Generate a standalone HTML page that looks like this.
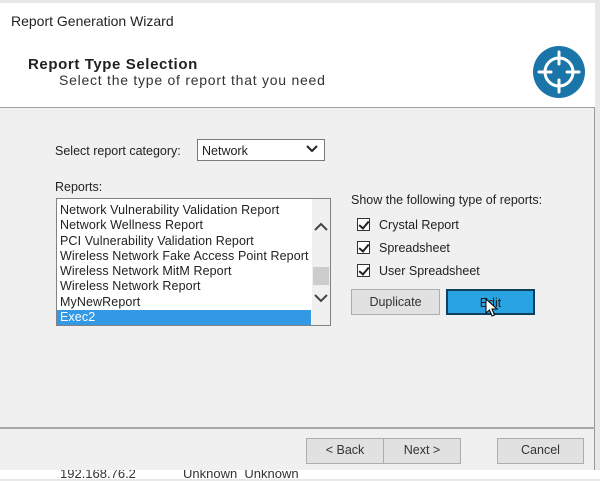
<!DOCTYPE html>
<html><head><style>
*{margin:0;padding:0;box-sizing:border-box}
body{width:600px;height:479px;overflow:hidden;background:#e8e8e8;font-family:"Liberation Sans",sans-serif;font-size:12.5px;color:#222;position:relative}
.a{position:absolute}
.win{left:0;top:3px;width:595px;height:467px;background:#f0f0f0;border-right:1px solid #999}
.btn{position:absolute;background:#e1e1e1;border:1px solid #adadad;text-align:center;line-height:23px;color:#333}
.cb{position:absolute;width:13px;height:13px;border:1px solid #333;background:#fff}
.cb:after{content:"";position:absolute;left:3px;top:0px;width:4px;height:8px;border:solid #222;border-width:0 2px 2px 0;transform:rotate(40deg)}
</style></head><body>
<div class="a" style="left:0;top:470px;width:600px;height:9px;background:#fff"></div>
<div class="a" style="left:60px;top:466px;font-size:13px;color:#333">192.168.76.2</div>
<div class="a" style="left:183px;top:466px;font-size:13px;color:#333">Unknown&nbsp;&nbsp;Unknown</div>
<div class="a win"></div>
<div class="a" style="left:0;top:3px;width:595px;height:104px;background:#fff"></div>
<div class="a" style="left:0;top:107px;width:595px;height:1px;background:#a0a0a0"></div>
<div class="a" style="left:11px;top:13px;font-size:14px;color:#222">Report Generation Wizard</div>
<div class="a" style="left:28px;top:56px;font-size:15px;letter-spacing:0.6px;font-weight:bold;color:#222">Report Type Selection</div>
<div class="a" style="left:59px;top:72px;font-size:14px;letter-spacing:0.75px;color:#333">Select the type of report that you need</div>
<svg class="a" style="left:533px;top:46px" width="52" height="52" viewBox="0 0 52 52">
<circle cx="26" cy="26" r="26" fill="#1a75a8"/>
<circle cx="26" cy="26" r="14" fill="none" stroke="#fff" stroke-width="3"/>
<path d="M26 6V18M26 34V46M6 26H18M34 26H46" stroke="#fff" stroke-width="3" stroke-linecap="round"/>
</svg>
<div class="a" style="left:55px;top:144px">Select report category:</div>
<div class="a" style="left:197px;top:139px;width:128px;height:22px;background:#fff;border:1px solid #7a7a7a;padding:4px 4px">Network</div>
<svg class="a" style="left:306px;top:145px" width="12" height="8"><path d="M1 1L6 6L11 1" fill="none" stroke="#222" stroke-width="2"/></svg>
<div class="a" style="left:55px;top:180px">Reports:</div>
<div class="a" style="left:56px;top:198px;width:275px;height:128px;background:#fff;border:1px solid #828282;line-height:15.3px;padding-top:4px;padding-left:3px;letter-spacing:0.1px">
Network Vulnerability Validation Report<br>Network Wellness Report<br>PCI Vulnerability Validation Report<br>Wireless Network Fake Access Point Report<br>Wireless Network MitM Report<br>Wireless Network Report<br>MyNewReport<br>
<div style="margin-left:-3px;width:254px;background:#3399e5;color:#fff;padding-left:3px">Exec2</div>
</div>
<div class="a" style="left:312px;top:199px;width:18px;height:126px;background:#f0f0f0"></div>
<svg class="a" style="left:314px;top:222px" width="14" height="10"><path d="M1 8L7 2L13 8" fill="none" stroke="#444" stroke-width="2"/></svg>
<div class="a" style="left:313px;top:267px;width:16px;height:18px;background:#cdcdcd"></div>
<svg class="a" style="left:314px;top:293px" width="14" height="10"><path d="M1 2L7 8L13 2" fill="none" stroke="#444" stroke-width="2"/></svg>
<div class="a" style="left:351px;top:193px">Show the following type of reports:</div>
<div class="cb" style="left:357px;top:218px"></div><div class="a" style="left:379px;top:218px">Crystal Report</div>
<div class="cb" style="left:357px;top:241px"></div><div class="a" style="left:379px;top:241px">Spreadsheet</div>
<div class="cb" style="left:357px;top:264px"></div><div class="a" style="left:379px;top:264px">User Spreadsheet</div>
<div class="btn" style="left:351px;top:289px;width:89px;height:26px;line-height:24px">Duplicate</div>
<div class="btn" style="left:446px;top:289px;width:89px;height:26px;line-height:24px;background:#2aa3e3;border:2px solid #10405e;color:#222">Edit</div>
<svg class="a" style="left:485px;top:298px" width="14" height="20"><path d="M1 1L1 15L4.5 12L7 18L9.5 17L7 11L12 11Z" fill="#fff" stroke="#000" stroke-width="1"/></svg>
<div class="a" style="left:0;top:427px;width:595px;height:2px;background:#a8a8a8"></div>
<div class="btn" style="left:306px;top:438px;width:78px;height:26px">&lt; Back</div>
<div class="btn" style="left:383px;top:438px;width:78px;height:26px">Next &gt;</div>
<div class="btn" style="left:497px;top:438px;width:87px;height:26px">Cancel</div>
</body></html>
